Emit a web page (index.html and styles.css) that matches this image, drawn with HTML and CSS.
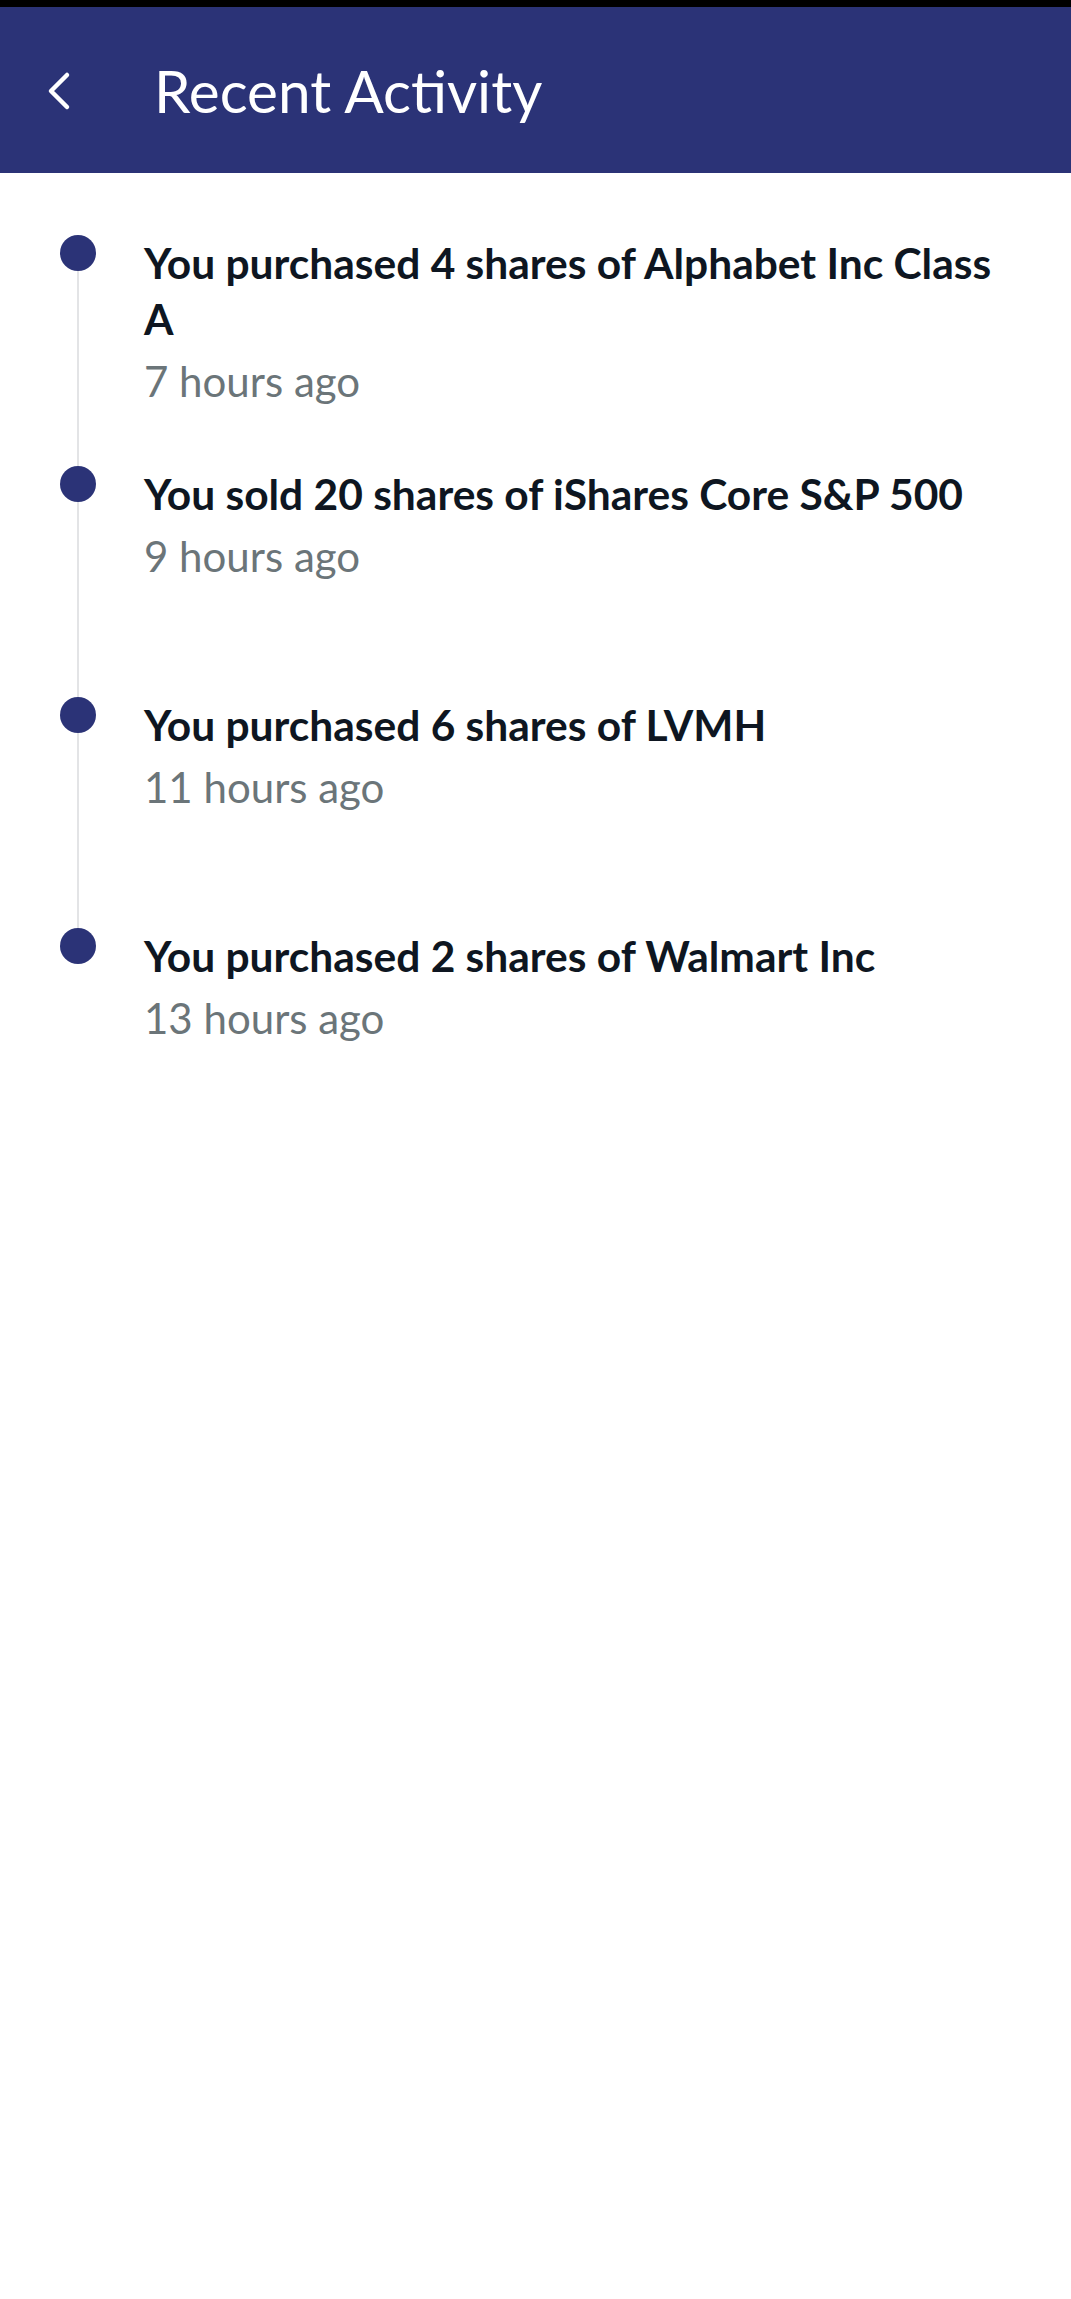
FILE: index.html
```html
<!DOCTYPE html>
<html>
<head>
    <title>Recent Activity</title>
    <link rel="stylesheet" href="styles.css">
</head>
<body>
    <div class="status-bar"></div>
    <div class="header">
        <button class="back">
            <svg width="28" height="40" viewBox="0 0 28 40">
                <path d="M22 4 L6 20 L22 36" fill="none" stroke="#fff" stroke-width="4.5" stroke-linecap="round" stroke-linejoin="round"/>
            </svg>
        </button>
        <h1 class="title">Recent Activity</h1>
    </div>

    <div class="timeline">
        <div class="item">
            <div class="dot"></div>
            <div class="content">
                <div class="text">You purchased 4 shares of Alphabet Inc Class A</div>
                <div class="time">7 hours ago</div>
            </div>
        </div>
        <div class="item">
            <div class="dot"></div>
            <div class="content">
                <div class="text">You sold 20 shares of iShares Core S&amp;P 500</div>
                <div class="time">9 hours ago</div>
            </div>
        </div>
        <div class="item">
            <div class="dot"></div>
            <div class="content">
                <div class="text">You purchased 6 shares of LVMH</div>
                <div class="time">11 hours ago</div>
            </div>
        </div>
        <div class="item">
            <div class="dot"></div>
            <div class="content">
                <div class="text">You purchased 2 shares of Walmart Inc</div>
                <div class="time">13 hours ago</div>
            </div>
        </div>
    </div>
</body>
</html>
```

FILE: styles.css
```css
body {
    margin: 0;
    font-family: Lato, "Open Sans", sans-serif;
    background: #fff;
}
.status-bar {
    height: 7px;
    background: #000;
}
.header {
    height: 166px;
    background: #2b3377;
    display: flex;
    align-items: center;
}
.back {
    width: 70px;
    margin-left: 24px;
    margin-top: 2px;
    padding: 0;
    border: none;
    background: none;
    display: flex;
    align-items: center;
    justify-content: center;
}
.title {
    margin: 0 0 0 60px;
    color: #fff;
    font-size: 58.5px;
    font-weight: 400;
}
.timeline {
    padding: 62px 50px 0 60px;
}
.item {
    position: relative;
    display: flex;
    min-height: 231px;
}
.item::before {
    content: "";
    position: absolute;
    left: 17px;
    top: 18px;
    width: 2px;
    height: 100%;
    background: #e3e4e6;
}
.item:last-child::before {
    display: none;
}
.dot {
    position: relative;
    width: 36px;
    height: 36px;
    border-radius: 50%;
    background: #2b3377;
    flex-shrink: 0;
}
.content {
    margin-left: 48px;
    margin-top: 0;
}
.text {
    color: #0e1621;
    font-size: 42.5px;
    font-weight: 700;
    line-height: 56px;
}
.time {
    margin-top: 5px;
    color: #6b7579;
    font-size: 42px;
    line-height: 58px;
}
```
